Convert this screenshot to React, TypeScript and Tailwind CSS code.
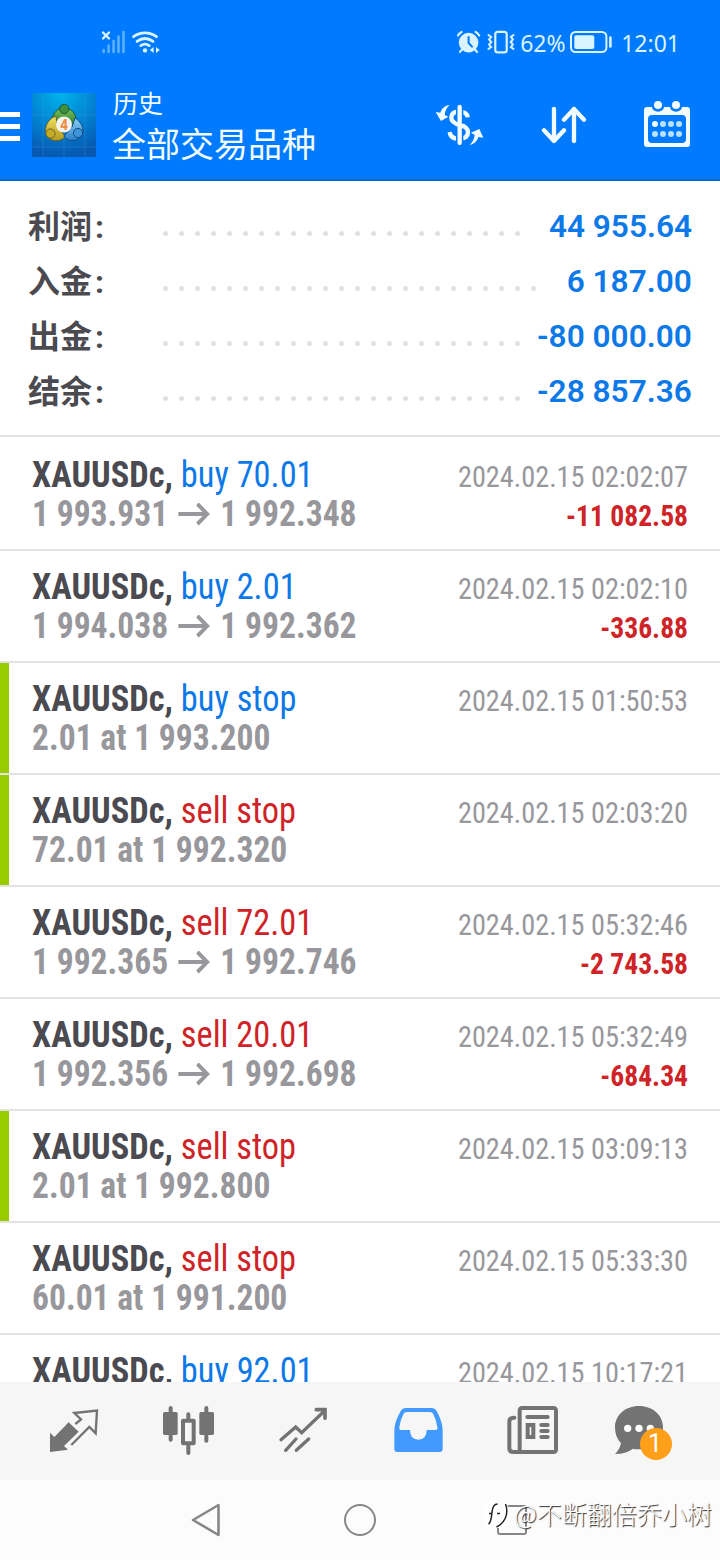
type Deal = {
    side: "buy" | "sell";
    label: string;
    from?: string;
    to?: string;
    pending?: string;
    time: string;
    profit?: string;
    marked?: boolean;
};

const summary = [
    {label: "利润", value: "44 955.64", dots: 23},
    {label: "入金", value: "6 187.00", dots: 24},
    {label: "出金", value: "-80 000.00", dots: 23},
    {label: "结余", value: "-28 857.36", dots: 23},
];

const deals: Deal[] = [
    {side: "buy", label: "buy 70.01", from: "1 993.931", to: "1 992.348", time: "2024.02.15 02:02:07", profit: "-11 082.58"},
    {side: "buy", label: "buy 2.01", from: "1 994.038", to: "1 992.362", time: "2024.02.15 02:02:10", profit: "-336.88"},
    {side: "buy", label: "buy stop", pending: "2.01 at 1 993.200", time: "2024.02.15 01:50:53", marked: true},
    {side: "sell", label: "sell stop", pending: "72.01 at 1 992.320", time: "2024.02.15 02:03:20", marked: true},
    {side: "sell", label: "sell 72.01", from: "1 992.365", to: "1 992.746", time: "2024.02.15 05:32:46", profit: "-2 743.58"},
    {side: "sell", label: "sell 20.01", from: "1 992.356", to: "1 992.698", time: "2024.02.15 05:32:49", profit: "-684.34"},
    {side: "sell", label: "sell stop", pending: "2.01 at 1 992.800", time: "2024.02.15 03:09:13", marked: true},
    {side: "sell", label: "sell stop", pending: "60.01 at 1 991.200", time: "2024.02.15 05:33:30"},
    {side: "buy", label: "buy 92.01", time: "2024.02.15 10:17:21"},
];

const StatusBar = () => (
    <div className="flex h-[84px] items-center pl-[100px] pr-10 text-[#d9f3ff]">
        <svg width="28" height="24" viewBox="100 29 28 24" fill="none" strokeLinecap="round">
            <g stroke="#5bb0ff" strokeWidth="2.6">
                <path d="M103.7 49v2M108.6 44.5v6.5M113.6 40v11M118.5 35.5v15.5M123.5 31v20"/>
            </g>
            <path d="M103 31.5l6 6M109 31.5l-6 6" stroke="currentColor" strokeWidth="2.4"/>
        </svg>
        <svg className="ml-[3px]" width="30" height="24" viewBox="131 29 30 24" fill="none" stroke="currentColor" strokeWidth="2.8" strokeLinecap="round">
            <path d="M133.5 35.7c7-5.2 16-5.2 23 0M137 40.4c5-3.6 11-3.6 16 0M140.8 44.6c2.6-1.8 5.8-1.8 8.4 0"/>
            <circle cx="145" cy="49.4" r="2.2" fill="currentColor" stroke="none"/>
            <path d="M153.6 46v6l-3.8-3zM156 46v6l3.8-3z" fill="currentColor" stroke="none"/>
        </svg>
        <svg className="ml-auto" width="60" height="24" viewBox="456 29 60 24" fill="none" stroke="currentColor" strokeLinecap="round">
            <circle cx="468.6" cy="41.6" r="9.8" fill="currentColor" stroke="none"/>
            <path d="M458 34.5c.8-1.6 2-2.8 3.6-3.6M479.2 34.5c-.8-1.6-2-2.8-3.6-3.6M462 48.5l-2 2.4M475 48.5l2 2.4" strokeWidth="2.2"/>
            <path d="M468.6 36v6l3.4 3.6" stroke="#007aff" strokeWidth="2"/>
            <rect x="495.3" y="30.8" width="11.4" height="20.6" rx="2.4" strokeWidth="2.2"/>
            <path d="M488.5 34l2.6 2-2 2.4 2.2 2.6-2.2 2.6 2 2.4-2.6 2M513.5 34l-2.6 2 2 2.4-2.2 2.6 2.2 2.6-2 2.4 2.6 2" strokeWidth="2"/>
        </svg>
        <span className="ml-1 w-[50px] pt-[2px] font-['Noto_Sans',sans-serif] text-[23px]">62%</span>
        <svg width="42" height="24" viewBox="570 30 42 24" fill="none" stroke="currentColor">
            <rect x="571" y="32" width="35.4" height="20" rx="4.5" strokeWidth="2"/>
            <rect x="574.3" y="35.2" width="20" height="13.8" rx="2" fill="currentColor" stroke="none"/>
            <path d="M610.4 37.5v9" strokeWidth="2.6" strokeLinecap="round"/>
        </svg>
        <span className="ml-[9px] pt-[2px] font-['Noto_Sans',sans-serif] text-[23px]">12:01</span>
    </div>
);

const AppLogo = () => (
    <svg className="ml-3" width="64" height="64" viewBox="0 0 64 64">
        <defs>
            <radialGradient id="sky" cx="0.45" cy="0" r="1">
                <stop offset="0" stopColor="#00b5ea"/>
                <stop offset="0.5" stopColor="#0285d4"/>
                <stop offset="1" stopColor="#0758b0"/>
            </radialGradient>
            <linearGradient id="green" x1="0" y1="0" x2="0" y2="1">
                <stop offset="0" stopColor="#7cc35a"/>
                <stop offset="1" stopColor="#2c7d2d"/>
            </linearGradient>
            <linearGradient id="yellow" x1="0" y1="0" x2="0" y2="1">
                <stop offset="0" stopColor="#f0e062"/>
                <stop offset="1" stopColor="#b39a1c"/>
            </linearGradient>
            <linearGradient id="blue" x1="0" y1="0" x2="0" y2="1">
                <stop offset="0" stopColor="#8fd0f4"/>
                <stop offset="1" stopColor="#2a80c8"/>
            </linearGradient>
        </defs>
        <rect width="64" height="64" fill="url(#sky)"/>
        <path d="M11 0v64M32 0v64M53 0v64M0 22h64M0 54h64" stroke="#4fb4ea" strokeWidth="0.6" opacity="0.4"/>
        <g strokeWidth="1">
            <path d="M20.500 27c0-7 5-12 11.500-12s12 5 12 12l-3 5H24z" fill="url(#green)" stroke="#1c5c30"/>
            <path d="M24 23c-6 2-10.500 8-10.500 14.500S19 48.500 26 47.500c3-.3 5-1.500 7-4L25 32z" fill="url(#yellow)" stroke="#6d6424"/>
            <path d="M43 25c5 3 8 8 8 13s-4 9.500-11 9.500c-4 0-7-2-8-4.500l8-9z" fill="url(#blue)" stroke="#124a86"/>
            <circle cx="32.200" cy="16" r="4.600" fill="#3f8f3c" stroke="#1c5c30"/>
            <circle cx="18.500" cy="40.500" r="4.600" fill="#c4ab25" stroke="#6d6424"/>
            <circle cx="46" cy="40" r="4.600" fill="#3b95d8" stroke="#124a86"/>
        </g>
        <circle cx="32" cy="31.500" r="8" fill="#f5f3ee"/>
        <text x="32" y="36.500" textAnchor="middle" fontSize="14" fontWeight="700" fontFamily="Roboto, sans-serif" fill="#f08a3c">4</text>
    </svg>
);

const Header = () => (
    <header className="h-[181px] border-b-2 border-[#0a6ace] bg-[#007aff] text-[#f2fcff]">
        <StatusBar/>
        <div className="flex h-[82px] items-center">
            <div className="flex w-5 flex-col gap-[7px] pt-[3px]">
                <div className="h-[5px] bg-white"/>
                <div className="h-[5px] bg-white"/>
                <div className="h-[5px] bg-white"/>
            </div>
            <AppLogo/>
            <div className="ml-4 flex flex-col pb-[2px] font-['Noto_Sans_CJK_SC',sans-serif]">
                <span className="pl-px text-[25px] leading-[38px]">历史</span>
                <span className="text-[34px] leading-[44px]">全部交易品种</span>
            </div>
            {/* exchange, sort, calendar; drawn on a 3x grid */}
            <svg className="ml-auto" width="50" height="44" viewBox="46 54 150 132" fill="none" stroke="currentColor">
                <path d="M144 97c-1-12-11-17-26-17-15 0-23 7-23 18 0 12 10 17 24 21 16 4 26 10 26 23s-10 19-27 19c-17 0-27-7-28-20" strokeWidth="13"/>
                <path d="M120 60v119" stroke="#007aff" strokeWidth="22"/>
                <path d="M120 66v108" strokeWidth="13" strokeLinecap="round"/>
                <path d="M108 116l26 9" strokeWidth="13"/>
                <path d="M90 60c-14 2-24 10-28 23l-14-2 16 27 22-13-11-5c1-12 6-22 15-30zM150 180c14-3 23-12 26-24l15 2-12-26-25 11 11 7c-1 11-6 22-15 30z" fill="currentColor" stroke="none"/>
            </svg>
            <svg className="ml-[56px]" width="46" height="44" viewBox="363 54 138 132" fill="none" stroke="currentColor" strokeWidth="13" strokeLinecap="round" strokeLinejoin="round">
                <path d="M402 72v96M372 136l30 32 30-32M462 168V72M432 104l30-32 30 32"/>
            </svg>
            <svg className="ml-[56px] mr-[29px]" width="48" height="50" viewBox="669 45 144 150" fill="currentColor">
                <path fillRule="evenodd" d="M681 66h15a18 14 0 0 0 36 0h18a18 14 0 0 0 36 0h15q9 0 9 9v102q0 9-9 9H681q-9 0-9-9V75q0-9 9-9zM696 90q-12 0-12 12v60q0 12 12 12h90q12 0 12-12v-60q0-12-12-12z"/>
                <circle cx="714" cy="60" r="12"/>
                <circle cx="768" cy="60" r="12"/>
                <circle cx="705" cy="117" r="9"/>
                <g fill="#b8e2ff">
                    <circle cx="729" cy="117" r="9"/>
                    <circle cx="753" cy="117" r="9"/>
                    <circle cx="777" cy="117" r="9"/>
                    <circle cx="705" cy="147" r="9"/>
                    <circle cx="729" cy="147" r="9"/>
                    <circle cx="753" cy="147" r="9"/>
                    <circle cx="777" cy="147" r="9"/>
                </g>
            </svg>
        </div>
    </header>
);

const Summary = () => (
    <section className="flex h-[256px] flex-col border-b-2 border-[#e3e3e3] pl-7 pr-7 pt-[18px]">
        {summary.map(({label, value, dots}) => (
            <div key={label} className="flex h-[55px] items-center">
                <span className="w-[134px] pt-px font-['Roboto','Noto_Sans_CJK_SC',sans-serif] text-[32px] font-bold leading-[54px] text-[#4a4a50]">
                    {label}<span className="pl-[3px]">:</span>
                </span>
                <div className="flex gap-[11px] pl-px pt-[14px]">
                    {Array.from({length: dots}, (_, i) => (
                        <span key={i} className="size-[5px] rounded-full bg-[#e2e2e2]"/>
                    ))}
                </div>
                <span className="ml-auto origin-right scale-x-[0.987] font-['Roboto',sans-serif] text-[32px] font-semibold leading-[55px] text-[#0d79e8]">{value}</span>
            </div>
        ))}
    </section>
);

const DealRow = ({deal}: { deal: Deal }) => (
    <li className="flex h-[112px] shrink-0 border-b-2 border-[#e3e3e3]">
        <div className={deal.marked ? "w-[9px] bg-[#99cc00]" : "w-[9px]"}/>
        <div className="flex flex-1 justify-between whitespace-nowrap pl-[23px] pr-8">
            <div className="pt-[17px] text-[36px] leading-[39px]">
                <div className="origin-left scale-x-[0.955]">
                    <span className="font-bold text-[#4a4a50]">{"XAUUSDc, "}</span>
                    <span className={deal.side === "buy" ? "text-[#0d79e8]" : "text-[#cf2327]"}>{deal.label}</span>
                </div>
                {deal.pending && (
                    <div className="origin-left scale-x-[0.932] font-bold text-[#97979c]">{deal.pending}</div>
                )}
                {deal.from && (
                    <div className="flex origin-left scale-x-[0.932] font-bold text-[#97979c]">
                        <span>{deal.from}</span>
                        <svg className="mx-[10px]" width="36" height="39" viewBox="0 0 36 39" fill="none" stroke="currentColor" strokeWidth="4">
                            <path d="M1 19h31M21.500 9L32 19 21.500 29"/>
                        </svg>
                        <span>{deal.to}</span>
                    </div>
                )}
            </div>
            <div className="pt-[18px] text-right text-[30px] leading-[39px]">
                <div className="origin-right scale-x-[0.943] text-[#97979c]">{deal.time}</div>
                {deal.profit && (
                    <div className="origin-right scale-x-[0.92] font-bold text-[#cf2327]">{deal.profit}</div>
                )}
            </div>
        </div>
    </li>
);

const TabBar = () => (
    <nav className="flex h-[98px] items-start bg-[#f6f6f6] pl-[47px] pt-[22px] text-[#737373]">
        <svg width="53" height="52" viewBox="141 252 159 156" fill="currentColor">
            <path d="M150 338l13 13 43-44 30 28-44 43 12 11-54 7z"/>
            <path d="M226 312l17-14-20-19 68-7-4 68-19-19-54 54" fill="none" stroke="currentColor" strokeWidth="7"/>
        </svg>
        <svg className="ml-[62px]" width="53" height="52" viewBox="486 252 159 156" fill="currentColor">
            <rect x="489" y="276" width="44" height="69" rx="5"/>
            <rect x="598" y="276" width="44" height="69" rx="5"/>
            <path d="M512 264v95M619 264v98M565 283v16M565 374v25" stroke="currentColor" strokeWidth="12" strokeLinecap="round"/>
            <rect x="549" y="302" width="32" height="68" fill="none" stroke="currentColor" strokeWidth="12" strokeLinejoin="round"/>
        </svg>
        <svg className="ml-[62px]" width="53" height="52" viewBox="831 252 159 156" fill="none" stroke="currentColor" strokeWidth="10" strokeLinecap="round">
            <path d="M843 359l44-38 18 17 68-65M857 391l31-34M889 391l37-34"/>
            <path d="M949 269h26v26" strokeWidth="11"/>
        </svg>
        <svg className="ml-[62px]" width="53" height="52" viewBox="96 252 159 156">
            <path fill="#429aff" fillRule="evenodd" d="M138 264h76q12 0 17 11 17 31 17 58v54q0 9-9 9H112q-9 0-9-9v-54q0-27 18-58 5-11 17-11zM140 276q-7 0-10 7-8 15-12 38-1 9 5 9h27q0 29 25 29t25-29h26q8 0 6-9-4-23-12-38-3-7-10-7z"/>
        </svg>
        <svg className="ml-[61px]" width="53" height="52" viewBox="441 252 159 156" fill="none" stroke="currentColor" strokeWidth="12" strokeLinecap="round">
            <rect x="482" y="264" width="109" height="132" rx="7"/>
            <path d="M466 293q-15 0-15 12v80q0 11 12 11h22"/>
            <path d="M505 291h61M547 315h19M547 333h19M547 351h19"/>
            <rect x="506" y="315" width="17" height="36"/>
        </svg>
        <div className="relative ml-[55px]">
            <svg width="53" height="52" viewBox="762 252 159 156">
                <path fill="currentColor" d="M837 258c42 0 72 28 72 64s-30 66-72 66c-6 0-12 0-18-2-14 10-32 16-54 16 10-9 16-21 18-32-12-12-18-28-18-48 0-36 30-64 72-64z"/>
                <circle cx="803" cy="325" r="11" fill="#fff"/>
                <circle cx="837" cy="325" r="11" fill="#fff"/>
                <circle cx="871" cy="325" r="11" fill="#fff"/>
            </svg>
            <span className="absolute left-[26px] top-6 size-8 rounded-full bg-[#ff9f1a] pr-[2px] text-center font-['Roboto',sans-serif] text-[25px] leading-8 text-white">1</span>
        </div>
    </nav>
);

const SystemNav = () => (
    <div className="relative flex h-20 items-center bg-[#fcfcfc] pl-[190px]">
        <svg width="32" height="36" viewBox="0 0 32 36" fill="none" stroke="#878787" strokeWidth="2.600" strokeLinejoin="round">
            <path d="M28.500 3v30L3 18z"/>
        </svg>
        <div className="ml-[122px] size-8 rounded-full border-[2.500px] border-[#878787]"/>
        <div className="ml-[121px] h-[30px] w-[30px] rounded-[3px] border-[2.500px] border-[#878787]"/>
        <div className="absolute left-[484px] top-[15px] flex items-center whitespace-nowrap font-['Noto_Sans_CJK_SC',sans-serif] text-[25px] font-light leading-9 text-white [text-shadow:1px_1px_1px_#222]">
            <svg className="mr-1 mt-[2px]" width="26" height="30" viewBox="0 0 26 30">
                <rect width="24" height="28" y="1" rx="7" fill="#fff"/>
                <path d="M13.500 5c-4 0-5 3-5.500 8s-1 11-3.500 12M5 14.500h3M13 14.500h3M21.500 5c3 8 1 18-9 23" fill="none" stroke="#222" strokeWidth="1.500"/>
            </svg>
            @不断翻倍乔小树
        </div>
    </div>
);

const App = () => {
    return (
        <div className="h-[1560px] w-[720px] overflow-hidden bg-white">
            <Header/>
            <Summary/>
            <ul className="flex h-[945px] flex-col overflow-hidden pt-[2px] font-['Roboto_Condensed',sans-serif]">
                {deals.map((deal) => <DealRow key={deal.time} deal={deal}/>)}
            </ul>
            <TabBar/>
            <SystemNav/>
        </div>
    );
};

export default App;
